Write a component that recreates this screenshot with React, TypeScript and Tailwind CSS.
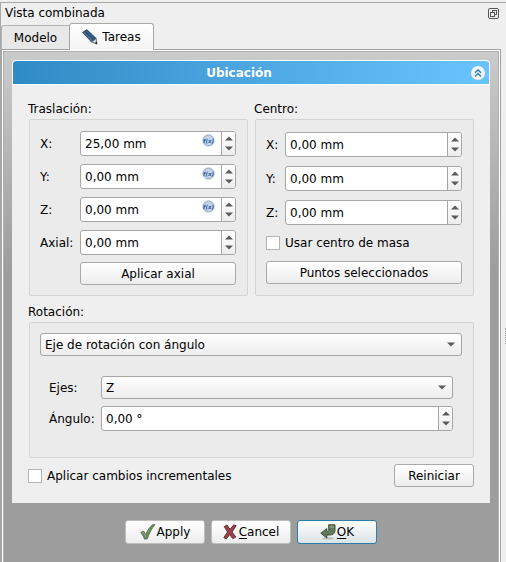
import React, { useId, useState } from "react";

const buttonLook =
  "rounded-[3px] border border-[#a9a9a9] bg-linear-to-b from-white to-[#ededed] text-center";

function ExpressionIcon() {
  return (
    <svg width="13" height="13" viewBox="0 0 13 13" aria-hidden="true">
      <circle cx="6.5" cy="6.5" r="5.5" fill="#c3d3e8" stroke="#8ba3c1" />
      <text x="6.5" y="8.6" textAnchor="middle" fontSize="5.5" fontWeight="bold" fontStyle="italic" fill="#2f5c9c">
        f(x)
      </text>
    </svg>
  );
}

function Arrow({ up = false }: { up?: boolean }) {
  return (
    <svg width="8" height="5" viewBox="0 0 8 5" aria-hidden="true">
      <path d={up ? "M0 4.5 4 0.5 8 4.5z" : "M0 0.5 4 4.5 8 0.5z"} fill="#5a5a5a" />
    </svg>
  );
}

type SpinProps = { label: string; initial: string; labelClass: string; bound?: boolean };

function SpinRow({ label, initial, labelClass, bound = false }: SpinProps) {
  const id = useId();
  const [value, setValue] = useState(initial);
  const step = (delta: number) => {
    const [amount, unit] = value.split(" ");
    const next = parseFloat(amount.replace(",", ".")) + delta;
    setValue(`${next.toFixed(2).replace(".", ",")} ${unit ?? ""}`);
  };
  return (
    <div className="flex items-center">
      <label htmlFor={id} className={`shrink-0 ${labelClass}`}>
        {label}
      </label>
      <div className="relative flex h-[25px] min-w-0 flex-1 overflow-hidden rounded-[3px] border border-[#a6a6a6] bg-white">
        <input
          id={id}
          value={value}
          onChange={(e) => setValue(e.target.value)}
          className="min-w-0 flex-1 bg-transparent px-1 outline-none"
        />
        {bound && (
          <span className="absolute top-[2px] right-5">
            <ExpressionIcon />
          </span>
        )}
        <div className="flex w-[14px] flex-col border-l border-[#a6a6a6] bg-linear-to-b from-white to-[#ededed]">
          <button type="button" aria-label="Aumentar" onClick={() => step(1)} className="flex flex-1 items-center justify-center pt-[2px]">
            <Arrow up />
          </button>
          <button type="button" aria-label="Disminuir" onClick={() => step(-1)} className="flex flex-1 items-center justify-center pb-[2px]">
            <Arrow />
          </button>
        </div>
      </div>
    </div>
  );
}

function Combo({ id, options, label }: { id: string; options: string[]; label?: string }) {
  return (
    <div className="relative flex h-[23px] min-w-0 flex-1">
      <select
        id={id}
        aria-label={label}
        className="h-full w-full appearance-none rounded-[3px] border border-[#a6a6a6] bg-linear-to-b from-white to-[#ededed] px-1 outline-none"
      >
        {options.map((o) => (
          <option key={o}>{o}</option>
        ))}
      </select>
      <span className="pointer-events-none absolute inset-y-0 right-[7px] flex items-center">
        <Arrow />
      </span>
    </div>
  );
}

function Check({ children }: { children: React.ReactNode }) {
  return (
    <label className="flex h-[14px] items-center gap-[5px] whitespace-nowrap">
      <input type="checkbox" className="size-[14px] appearance-none border border-[#b5b5b5] bg-white checked:bg-[#308cc6]" />
      {children}
    </label>
  );
}

function PencilIcon() {
  return (
    <svg width="16" height="16" viewBox="0 0 16 16" aria-hidden="true">
      <path d="M0.6 3.4 4.8 0.6 14.2 9.4 9.6 13z" fill="#2d527f" stroke="#1d3554" strokeWidth="0.8" />
      <path d="M1.8 3.4 10.4 11.8" stroke="#52769f" strokeWidth="1.2" />
      <path d="M4 1.8 12.6 10" stroke="#3f658f" strokeWidth="1" />
      <path d="M9.6 13 14.2 9.4 15 15z" fill="#d4d3d0" stroke="#55585c" strokeWidth="0.7" />
      <path d="M12.6 14.2 14.7 12.4 15.2 15.2z" fill="#222" />
    </svg>
  );
}

function ApplyIcon() {
  return (
    <svg width="16" height="16" viewBox="0 0 16 16" aria-hidden="true">
      <path d="M0.8 8.6 3.6 7 5.8 10.6C7.6 6 10 2.6 12.6 0.8L15 0.6C11.6 4.6 9.2 9.2 7.4 14.8L4.6 15.2C3.6 12.6 2.4 10.4 0.8 8.6z" fill="#6f8f5f" stroke="#4d6544" strokeWidth="0.8" />
      <path d="M2.2 8.6 3.4 8.2 5.6 12.6" fill="none" stroke="#8ba67c" strokeWidth="0.8" />
    </svg>
  );
}

function CancelIcon() {
  return (
    <svg width="14" height="16" viewBox="0 0 14 16" aria-hidden="true">
      <path d="M1.2 2.6 4 1 7 5.4 10.6 1 13.2 1.6 9 8 12.8 13 9.8 14.6 6.6 10.6 3.4 14.8 0.8 13.6 4.6 8z" fill="#a0404a" stroke="#4b2529" strokeWidth="0.9" />
    </svg>
  );
}

function OkIcon() {
  return (
    <svg width="16" height="16" viewBox="0 0 16 16" aria-hidden="true">
      <ellipse cx="8" cy="14.4" rx="6" ry="1.2" fill="#b6bfc2" />
      <path d="M8.6 0.8H15V6.6C15 9.4 13 11 9.4 11H6.8V14L0.8 9.2 6.8 4.6V7.4H8C8.6 7.4 8.8 7 8.8 6.4z" fill="#64785a" stroke="#36452f" strokeWidth="0.9" />
      <path d="M9.6 1.8H14V4H9.6z" fill="#82966f" />
    </svg>
  );
}

const groupBox = "ml-px rounded-[2px] border border-[#d4d4d4] bg-[#ebebeb]";

export default function App() {
  const axisId = useId();
  const modeId = useId();
  return (
    <div className="flex min-h-screen bg-[#efefef] pt-[2px] font-['DejaVu_Sans',sans-serif] text-[12px] leading-4 text-black">
      <div className="flex min-w-0 flex-1 flex-col border-t border-l border-[#a8a8a8]">
        <header className="flex h-5 items-center justify-between pr-[7px] pl-1">
          <h1>Vista combinada</h1>
          <button type="button" aria-label="Desacoplar panel">
            <svg width="11" height="11" viewBox="0 0 11 11" fill="none" stroke="#555" aria-hidden="true">
              <rect x="0.5" y="0.5" width="10" height="10" rx="1.5" />
              <rect x="4.5" y="2.5" width="4" height="4" />
              <rect x="2.5" y="4.5" width="4" height="4" fill="#efefef" />
            </svg>
          </button>
        </header>

        <div className="flex flex-1">
          <div className="flex min-w-0 flex-1 flex-col">
            <div role="tablist" className="flex h-[26px] items-end">
              <button type="button" role="tab" aria-selected="false" className="h-6 w-[68px] rounded-tl-[3px] border-t border-l border-[#b4b4b4] bg-[#e8e8e8]">
                Modelo
              </button>
              <button
                type="button"
                role="tab"
                aria-selected="true"
                className="z-10 -mb-px flex h-[27px] w-[85px] items-center justify-center gap-1 rounded-t-[3px] border-x border-t border-[#a8a8a8] bg-linear-to-b from-white to-[#f4f4f4]"
              >
                <PencilIcon />
                Tareas
              </button>
            </div>

            <div className="flex flex-1 flex-col border-x border-t border-[#a3a3a3] bg-white px-px pt-px">
              <main className="flex flex-1 flex-col border-x border-t border-[#b0b0b0] bg-[#9d9d9d] bg-linear-to-b from-[#cbcbcb] to-[#9d9d9d] to-[220px] px-2 pt-2">
                <section className="overflow-hidden rounded-t-[4px] bg-[#efefef]">
                  <div className="flex h-[25px] items-center gap-[6px] rounded-t-[4px] border border-white bg-linear-to-r from-[#2f8bc5] to-[#69c3ff] pr-1 text-white">
                    <h2 className="flex-1 text-center font-bold">Ubicación</h2>
                    <button type="button" aria-label="Contraer" className="flex size-[14px] items-center justify-center rounded-full bg-[#f2f2f2]">
                      <svg width="8" height="8" viewBox="0 0 8 8" fill="none" stroke="#2480b8" strokeWidth="1.4" aria-hidden="true">
                        <path d="M1 3.8 4 0.9 7 3.8M1 7.4 4 4.5 7 7.4" />
                      </svg>
                    </button>
                  </div>

                  <div className="px-4 pt-4 pb-4">
                    <div className="grid grid-cols-2 gap-[6px]">
                      <div className="flex flex-col gap-[2px]">
                        <h3>Traslación:</h3>
                        <div className={`${groupBox} flex-1 pt-[11px] pr-[11px] pb-[10px] pl-[10px]`}>
                          <div className="flex flex-col gap-2">
                            <SpinRow label="X:" initial="25,00 mm" labelClass="w-10" bound />
                            <SpinRow label="Y:" initial="0,00 mm" labelClass="w-10" bound />
                            <SpinRow label="Z:" initial="0,00 mm" labelClass="w-10" bound />
                            <SpinRow label="Axial:" initial="0,00 mm" labelClass="w-10" />
                          </div>
                          <div className="mt-[7px] flex pl-10">
                            <button type="button" className={`${buttonLook} h-[23px] flex-1`}>
                              Aplicar axial
                            </button>
                          </div>
                        </div>
                      </div>

                      <div className="flex flex-col gap-[2px]">
                        <h3>Centro:</h3>
                        <div className={`${groupBox} flex flex-1 flex-col gap-[11px] pt-3 pr-[11px] pb-[11px] pl-[10px]`}>
                          <div className="flex flex-col gap-[9px]">
                            <SpinRow label="X:" initial="0,00 mm" labelClass="w-[19px]" />
                            <SpinRow label="Y:" initial="0,00 mm" labelClass="w-[19px]" />
                            <SpinRow label="Z:" initial="0,00 mm" labelClass="w-[19px]" />
                          </div>
                          <Check>Usar centro de masa</Check>
                          <button type="button" className={`${buttonLook} h-[23px]`}>
                            Puntos seleccionados
                          </button>
                        </div>
                      </div>
                    </div>

                    <h3 className="mt-2 mb-[2px]">Rotación:</h3>
                    <div className={`${groupBox} pt-[10px] pr-[11px] pb-[26px] pl-[10px]`}>
                      <div className="flex">
                        <Combo id={modeId} label="Modo de rotación" options={["Eje de rotación con ángulo", "Ángulos de Euler"]} />
                      </div>
                      <div className="mt-5 flex flex-col gap-[7px] px-[9px]">
                        <div className="flex items-center">
                          <label htmlFor={axisId} className="w-[52px] shrink-0">
                            Ejes:
                          </label>
                          <Combo id={axisId} options={["Z", "X", "Y"]} />
                        </div>
                        <SpinRow label="Ángulo:" initial="0,00 °" labelClass="w-[52px]" />
                      </div>
                    </div>

                    <div className="mt-[6px] flex items-center justify-between">
                      <Check>Aplicar cambios incrementales</Check>
                      <button type="button" className={`${buttonLook} h-[23px] w-20`}>
                        Reiniciar
                      </button>
                    </div>
                  </div>
                </section>

                <div className="flex justify-center gap-[6px] py-[17px]">
                  <button type="button" className="flex h-6 w-20 items-center justify-center gap-px rounded-[3px] border border-[#bdbdbd] bg-linear-to-b from-white to-[#ededed]">
                    <ApplyIcon />
                    Apply
                  </button>
                  <button type="button" className="flex h-6 w-20 items-center justify-center gap-[2px] rounded-[3px] border border-[#bdbdbd] bg-linear-to-b from-white to-[#ededed]">
                    <CancelIcon />
                    <span>
                      <span className="underline underline-offset-2">C</span>ancel
                    </span>
                  </button>
                  <button type="button" className="flex h-6 w-20 items-center justify-center gap-px rounded-[3px] border border-[#2f7dab] bg-linear-to-b from-white to-[#dbe4e9]">
                    <OkIcon />
                    <span>
                      <span className="underline underline-offset-2">O</span>K
                    </span>
                  </button>
                </div>
              </main>
            </div>
          </div>

          <div className="flex w-[5px] shrink-0 items-center justify-end pt-[86px]">
            <div className="h-4 border-r border-dotted border-[#999]" />
          </div>
        </div>
      </div>
    </div>
  );
}
